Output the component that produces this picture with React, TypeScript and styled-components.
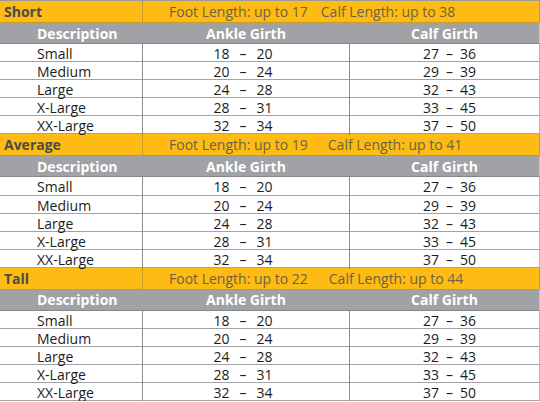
import { createGlobalStyle, styled } from 'styled-components';

const GlobalStyle = createGlobalStyle`
    body {
        margin: 0;
        background: #ffffff;
        font-family: "Open Sans", "Noto Sans", sans-serif;
    }
`;

const Chart = styled.div`
    width: 540px;
    border-top: 1px solid #9a9a9a;
    box-sizing: border-box;
`;

const Row = styled.div<{ $height: number }>`
    display: grid;
    grid-template-columns: 143px 207px 1fr;
    height: ${(p) => p.$height}px;
    box-sizing: border-box;
`;

const TitleRow = styled(Row)`
    background: #fdbb13;
    border-bottom: 1px solid #c99a24;
    border-right: 1px solid #c99a24;
    grid-template-columns: 143px 1fr;
`;

const HeaderRow = styled(Row)`
    background: #a1a2a6;
    border-bottom: 1px solid #85868a;
    border-right: 1px solid #c4c4c6;
`;

const DataRow = styled(Row)`
    background: #ffffff;
    border-bottom: 1px solid #a3a3a3;
    border-right: 1px solid #b8b8b8;
`;

const Cell = styled.div<{ $divider?: boolean; $align?: 'left' | 'center'; $shift?: number }>`
    display: flex;
    align-items: center;
    justify-content: ${(p) => (p.$align === 'left' ? 'flex-start' : 'center')};
    padding-left: ${(p) => (p.$align === 'left' ? 37 : Math.max(p.$shift ?? 0, 0) * 2)}px;
    padding-right: ${(p) => Math.max(-(p.$shift ?? 0), 0) * 2}px;
    border-right: ${(p) => (p.$divider ? '1px solid #8c8c8c' : 'none')};
    font-size: 14px;
    color: #1c1c1c;
    white-space: nowrap;
    box-sizing: border-box;
`;

const SectionName = styled(Cell)`
    padding-left: 4px;
    justify-content: flex-start;
    font-weight: 700;
    color: #4b4b4b;
    border-right: 1px solid #c99a24;
`;

const Measures = styled.div<{ $gap: number }>`
    display: flex;
    align-items: center;
    gap: ${(p) => p.$gap}px;
    padding-left: 26px;
    font-size: 14px;
    color: #6f6243;
    white-space: nowrap;
`;

const HeaderCell = styled(Cell)`
    color: #ffffff;
    font-weight: 700;
    border-right: ${(p) => (p.$divider ? '1px solid #a1a2a6' : 'none')};
`;

const Range = styled.span<{ $gap: number }>`
    display: inline-flex;
    gap: ${(p) => p.$gap}px;
`;

type Section = {
    name: string;
    foot: number;
    calf: number;
    gap: number;
};

const sections: Section[] = [
    { name: 'Short', foot: 17, calf: 38, gap: 13 },
    { name: 'Average', foot: 19, calf: 41, gap: 20 },
    { name: 'Tall', foot: 22, calf: 44, gap: 21 },
];

const sizes = [
    { label: 'Small', ankle: [18, 20], calf: [27, 36] },
    { label: 'Medium', ankle: [20, 24], calf: [29, 39] },
    { label: 'Large', ankle: [24, 28], calf: [32, 43] },
    { label: 'X-Large', ankle: [28, 31], calf: [33, 45] },
    { label: 'XX-Large', ankle: [32, 34], calf: [37, 50] },
];

function RangeText({ values, gap }: { values: number[]; gap: number }) {
    return (
        <Range $gap={gap}>
            <span>{values[0]}</span>
            <span>–</span>
            <span>{values[1]}</span>
        </Range>
    );
}

function SizeSection({ section }: { section: Section }) {
    return (
        <div>
            <TitleRow $height={22}>
                <SectionName>{section.name}</SectionName>
                <Measures $gap={section.gap}>
                    <span>Foot Length: up to {section.foot}</span>
                    <span>Calf Length: up to {section.calf}</span>
                </Measures>
            </TitleRow>
            <HeaderRow $height={21}>
                <HeaderCell $align="left" $divider>
                    Description
                </HeaderCell>
                <HeaderCell $divider>Ankle Girth</HeaderCell>
                <HeaderCell>Calf Girth</HeaderCell>
            </HeaderRow>
            {sizes.map((size) => (
                <DataRow key={size.label} $height={18.1}>
                    <Cell $align="left" $divider>
                        {size.label}
                    </Cell>
                    <Cell $divider $shift={-3}>
                        <RangeText values={size.ankle} gap={10} />
                    </Cell>
                    <Cell $shift={5}>
                        <RangeText values={size.calf} gap={7} />
                    </Cell>
                </DataRow>
            ))}
        </div>
    );
}

export default function App() {
    return (
        <>
            <GlobalStyle />
            <Chart>
                {sections.map((section) => (
                    <SizeSection key={section.name} section={section} />
                ))}
            </Chart>
        </>
    );
}
